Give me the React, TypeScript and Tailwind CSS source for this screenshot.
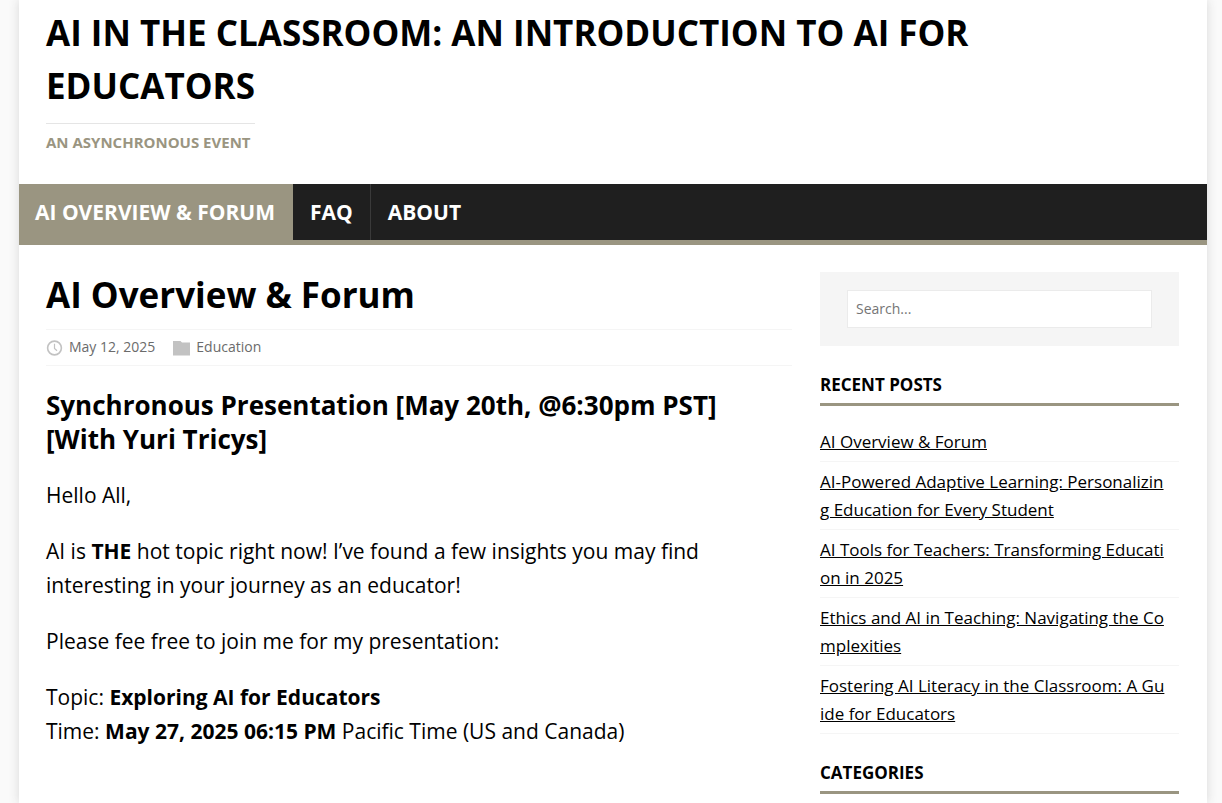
import React from "react";

const posts = [
  "AI Overview & Forum",
  "AI-Powered Adaptive Learning: Personalizing Education for Every Student",
  "AI Tools for Teachers: Transforming Education in 2025",
  "Ethics and AI in Teaching: Navigating the Complexities",
  "Fostering AI Literacy in the Classroom: A Guide for Educators",
];

function WidgetTitle({ children }: { children: React.ReactNode }) {
  return (
    <h3 className="border-b-3 border-[#9a9581] pb-1.5 text-[17px] leading-6 font-bold uppercase">
      {children}
    </h3>
  );
}

export default function App() {
  return (
    <div className="flow-root min-h-screen bg-[#fafafa] pr-[15px] pl-[19px] font-['Open_Sans',sans-serif] text-black">
      <div className="min-h-screen bg-white shadow-[0_0_10px_rgba(50,50,50,0.17)]">
        <header className="flex flex-col items-start px-[27px] pt-1.5 pb-[31px]">
          <h1 className="text-[35px] leading-[53px] font-bold uppercase">
            <a href="#">AI in the Classroom: An Introduction to AI for Educators</a>
          </h1>
          <p className="mt-[11px] border-t border-[#e5e5e5] pt-2 pr-1 text-[15px] leading-[21px] font-bold text-[#9a9581] uppercase">
            An Asynchronous Event
          </p>
        </header>
        <nav className="flex border-b-5 border-[#9a9581] bg-[#1f1f1f] text-[21px] leading-6 font-bold text-white uppercase">
          <a href="#" className="bg-[#9a9581] py-4 pr-[18px] pl-4">AI Overview & Forum</a>
          <a href="#" className="border-r border-[#3a3a3a] px-[17px] py-4">FAQ</a>
          <a href="#" className="px-[17px] py-4">About</a>
        </nav>
        <div className="flex gap-7 pt-[27px] pr-7 pl-[27px]">
          <main className="min-w-0 flex-1">
            <h2 className="text-[35px] leading-[46px] font-bold">AI Overview & Forum</h2>
            <div className="mt-[11px] flex h-[37px] items-center gap-[18px] border-y border-[#f5f5f5] text-[14px] leading-5 text-[#6b6b6b]">
              <span className="flex items-center gap-1.5">
                <svg className="size-[17px]" viewBox="0 0 17 17" fill="none" stroke="#c2c2c2" strokeWidth="1.6" aria-hidden="true">
                  <circle cx="8.5" cy="9" r="6.9" />
                  <path d="M8.5 4.7v4.8l2.5 2.2" strokeWidth="1.2" />
                </svg>
                <time className="pb-0.5">May 12, 2025</time>
              </span>
              <span className="flex items-center gap-1.5">
                <svg className="size-[17px]" viewBox="0 0 17 17" fill="#c2c2c2" aria-hidden="true">
                  <path d="M0 2h7.500l1.500 1.500h8V16.500H0z" />
                </svg>
                <a href="#" className="pb-0.5">Education</a>
              </span>
            </div>
            <h3 className="mt-[22px] text-[26px] leading-[34px] font-bold">
              Synchronous Presentation [May 20th, @6:30pm PST] [With Yuri Tricys]
            </h3>
            <div className="mt-[22px] flex flex-col gap-[22px] text-[21px] leading-[34px]">
              <p>Hello All,</p>
              <p>AI is <strong>THE</strong> hot topic right now! I’ve found a few insights you may find interesting in your journey as an educator!</p>
              <p>Please fee free to join me for my presentation:</p>
              <p>
                Topic: <strong>Exploring AI for Educators</strong>
                <br />
                Time: <strong>May 27, 2025 06:15 PM</strong> Pacific Time (US and Canada)
              </p>
            </div>
          </main>
          <aside className="w-[359px] shrink-0">
            <form className="bg-[#f5f5f5] px-[27px] py-[18px]">
              <input type="search" aria-label="Search" placeholder="Search..." className="block h-[38px] w-full border border-[#ebebeb] bg-white px-2 pb-0.5 text-[14px] placeholder:text-[#757575]" />
            </form>
            <div className="mt-[27px]">
              <WidgetTitle>Recent Posts</WidgetTitle>
              <ul className="mt-[22px] flex flex-col gap-[6px] text-[17px] leading-7">
                {posts.map((p) => (
                  <li key={p} className="border-b border-[#f5f5f5] pr-3 pb-[5px]">
                    <a href="#" className="break-all underline">{p}</a>
                  </li>
                ))}
              </ul>
            </div>
            <div className="mt-[27px]">
              <WidgetTitle>Categories</WidgetTitle>
            </div>
          </aside>
        </div>
      </div>
    </div>
  );
}
